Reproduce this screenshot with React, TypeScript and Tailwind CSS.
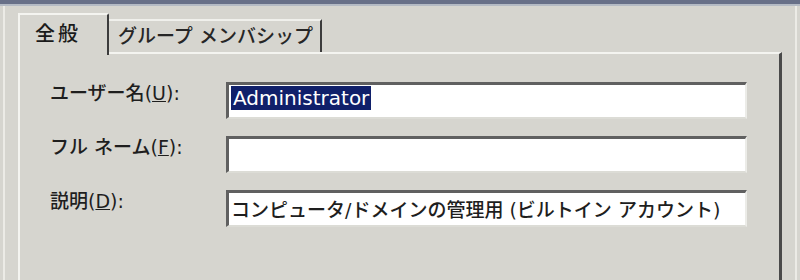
const font = "font-['DejaVu_Sans','Noto_Sans_CJK_JP',sans-serif]";

const Field = ({ label, children }: { label: React.ReactNode; children?: React.ReactNode }) => (
  <>
    <div className="h-[37px] text-[19px] leading-[22px] font-medium text-[#1e1e1e] whitespace-nowrap">{label}</div>
    <div className="h-[37px] border-t-[3px] border-l-[3px] border-[#606060] border-r-2 border-r-[#ecece8] border-b-2 border-b-[#dcdcd6] bg-white pl-[2px] pt-[1px] flex items-start">
      {children}
    </div>
  </>
);

const Key = ({ c }: { c: string }) => (
  <>
    (<span className="underline">{c}</span>):
  </>
);

const App = () => {
  return (
    <div className={`w-[800px] h-[280px] overflow-hidden bg-[#d6d5cf] flex flex-col ${font}`}>
      <div className="h-[4px] bg-[#687088]" />
      <div className="h-[2px] bg-[#b4bac4]" />
      <div className="flex-1 flex px-[3px]">
        <div className="flex-1 flex flex-col border-l-2 border-r-2 border-[#ecebe6] px-[13px]">
          {/* tabs */}
          <div className="flex items-end h-[46px] pt-[7px]">
            <div className="relative z-10 h-[42px] -mb-[3px] w-[91px] bg-[#d6d5cf] border-t-2 border-l-2 border-[#f4f4f0] border-r-2 border-r-[#3c3c3c] rounded-tr-[2px] pl-[15px] pt-[6px] text-[20px] tracking-[3px] leading-[26px] font-medium text-[#1a1a1a]">
              全般
            </div>
            <div className="h-[33px] w-[213px] border-t-2 border-[#f0f0ec] border-r-2 border-r-[#3c3c3c] pl-[9px] pt-[3px] text-[19px] leading-[24px] font-medium text-[#262626] whitespace-nowrap">
              グループ メンバシップ
            </div>
          </div>
          {/* panel */}
          <div className="flex-1 border-t-2 border-l-2 border-[#f4f4f0] border-r-[3px] border-r-[#4a4a4a] pl-[30px] pr-[32px] pt-[28px]">
            <div className="grid grid-cols-[176px_1fr] gap-y-[17px]">
              <Field label={<>ユーザー名<Key c="U" /></>}>
                <span className="bg-[#10206a] text-white text-[20px] leading-[24px] px-[2px]">Administrator</span>
              </Field>
              <Field label={<>フル ネーム<Key c="F" /></>} />
              <Field label={<>説明<Key c="D" /></>}>
                <span className="text-[19px] leading-[24px] pt-[4px] font-medium text-[#1e1e1e] whitespace-nowrap">
                  コンピュータ/ドメインの管理用 (ビルトイン アカウント)
                </span>
              </Field>
            </div>
          </div>
        </div>
      </div>
    </div>
  );
};

export default App;
